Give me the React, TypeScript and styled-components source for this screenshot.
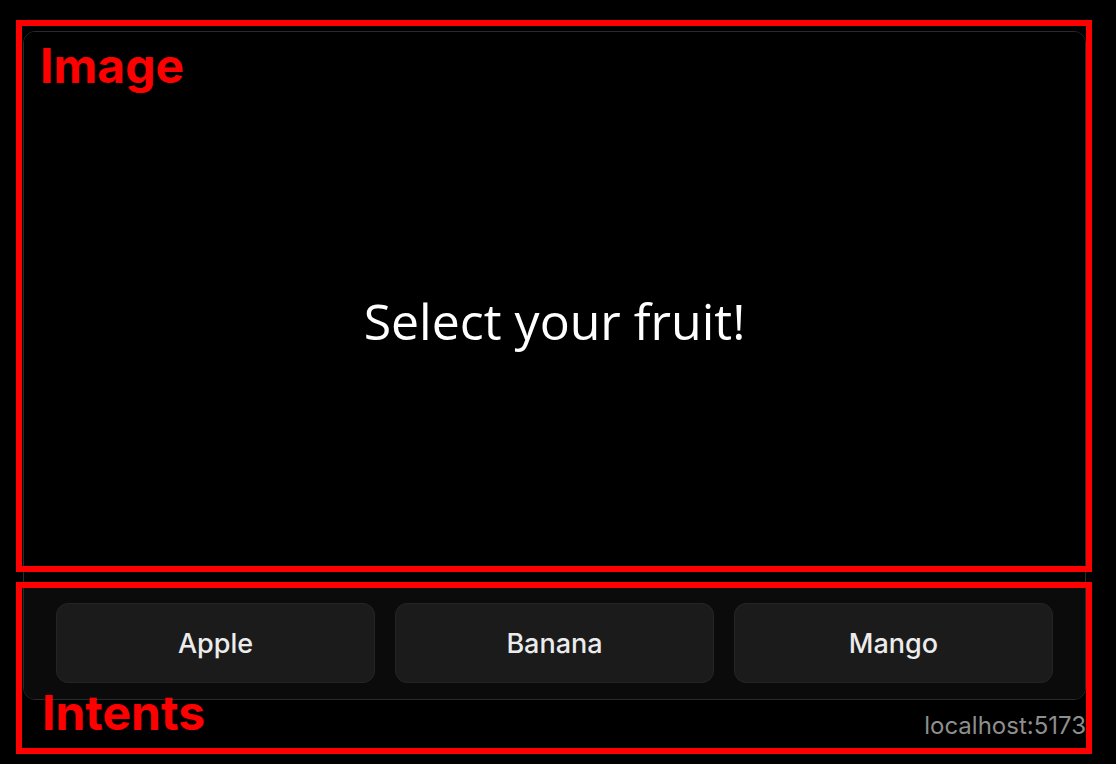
import styled, { createGlobalStyle } from 'styled-components';

const GlobalStyle = createGlobalStyle`
  html, body {
    margin: 0;
    padding: 0;
    background: #000;
  }
  body {
    font-family: Inter, "Noto Sans", sans-serif;
    color: #fff;
  }
`;

const Page = styled.div`
  position: relative;
  width: 1116px;
  height: 764px;
  box-sizing: border-box;
  padding: 31px 30px 0 23px;
  overflow: hidden;
`;

const Card = styled.div`
  border: 1px solid #2a2a2a;
  border-radius: 12px;
  overflow: hidden;
  display: flex;
  flex-direction: column;
`;

const ImageArea = styled.div`
  height: 553px;
  box-sizing: border-box;
  padding-top: 24px;
  background: #000;
  display: flex;
  align-items: center;
  justify-content: center;
`;

const Prompt = styled.div`
  font-family: "Open Sans", "Noto Sans", sans-serif;
  font-size: 50px;
  color: #fff;
`;

const IntentBar = styled.div`
  background: #0b0b0b;
  padding: 18px 32px 16px;
  display: flex;
  gap: 20px;
`;

const IntentButton = styled.button`
  flex: 1;
  height: 80px;
  border: 1px solid #252525;
  border-radius: 12px;
  background: #1b1b1b;
  color: #ececec;
  font-family: Inter, sans-serif;
  font-size: 27px;
  font-weight: 500;
  cursor: pointer;
`;

const Footer = styled.div`
  display: flex;
  justify-content: flex-end;
  margin-top: 11px;
  font-family: Inter, sans-serif;
  font-size: 24px;
  color: #8e8e8e;
`;

const Region = styled.div<{ $left: number; $top: number; $width: number; $height: number }>`
  position: absolute;
  left: ${p => p.$left}px;
  top: ${p => p.$top}px;
  width: ${p => p.$width}px;
  height: ${p => p.$height}px;
  box-sizing: border-box;
  border: 6px solid #ff0000;
  pointer-events: none;
`;

const RegionLabel = styled.div<{ $left: number; $top: number }>`
  position: absolute;
  left: ${p => p.$left}px;
  top: ${p => p.$top}px;
  font-family: Inter, sans-serif;
  font-weight: 700;
  font-size: 48px;
  line-height: 1;
  color: #ff0000;
  pointer-events: none;
`;

const fruits = ['Apple', 'Banana', 'Mango'];

export default function App() {
  return (
    <Page>
      <GlobalStyle />
      <Card>
        <ImageArea>
          <Prompt>Select your fruit!</Prompt>
        </ImageArea>
        <IntentBar>
          {fruits.map(f => (
            <IntentButton key={f}>{f}</IntentButton>
          ))}
        </IntentBar>
      </Card>
      <Footer>localhost:5173</Footer>

      <Region $left={16} $top={20} $width={1076} $height={552} />
      <RegionLabel $left={40} $top={42}>Image</RegionLabel>
      <Region $left={16} $top={582} $width={1076} $height={172} />
      <RegionLabel $left={42} $top={689}>Intents</RegionLabel>
    </Page>
  );
}
